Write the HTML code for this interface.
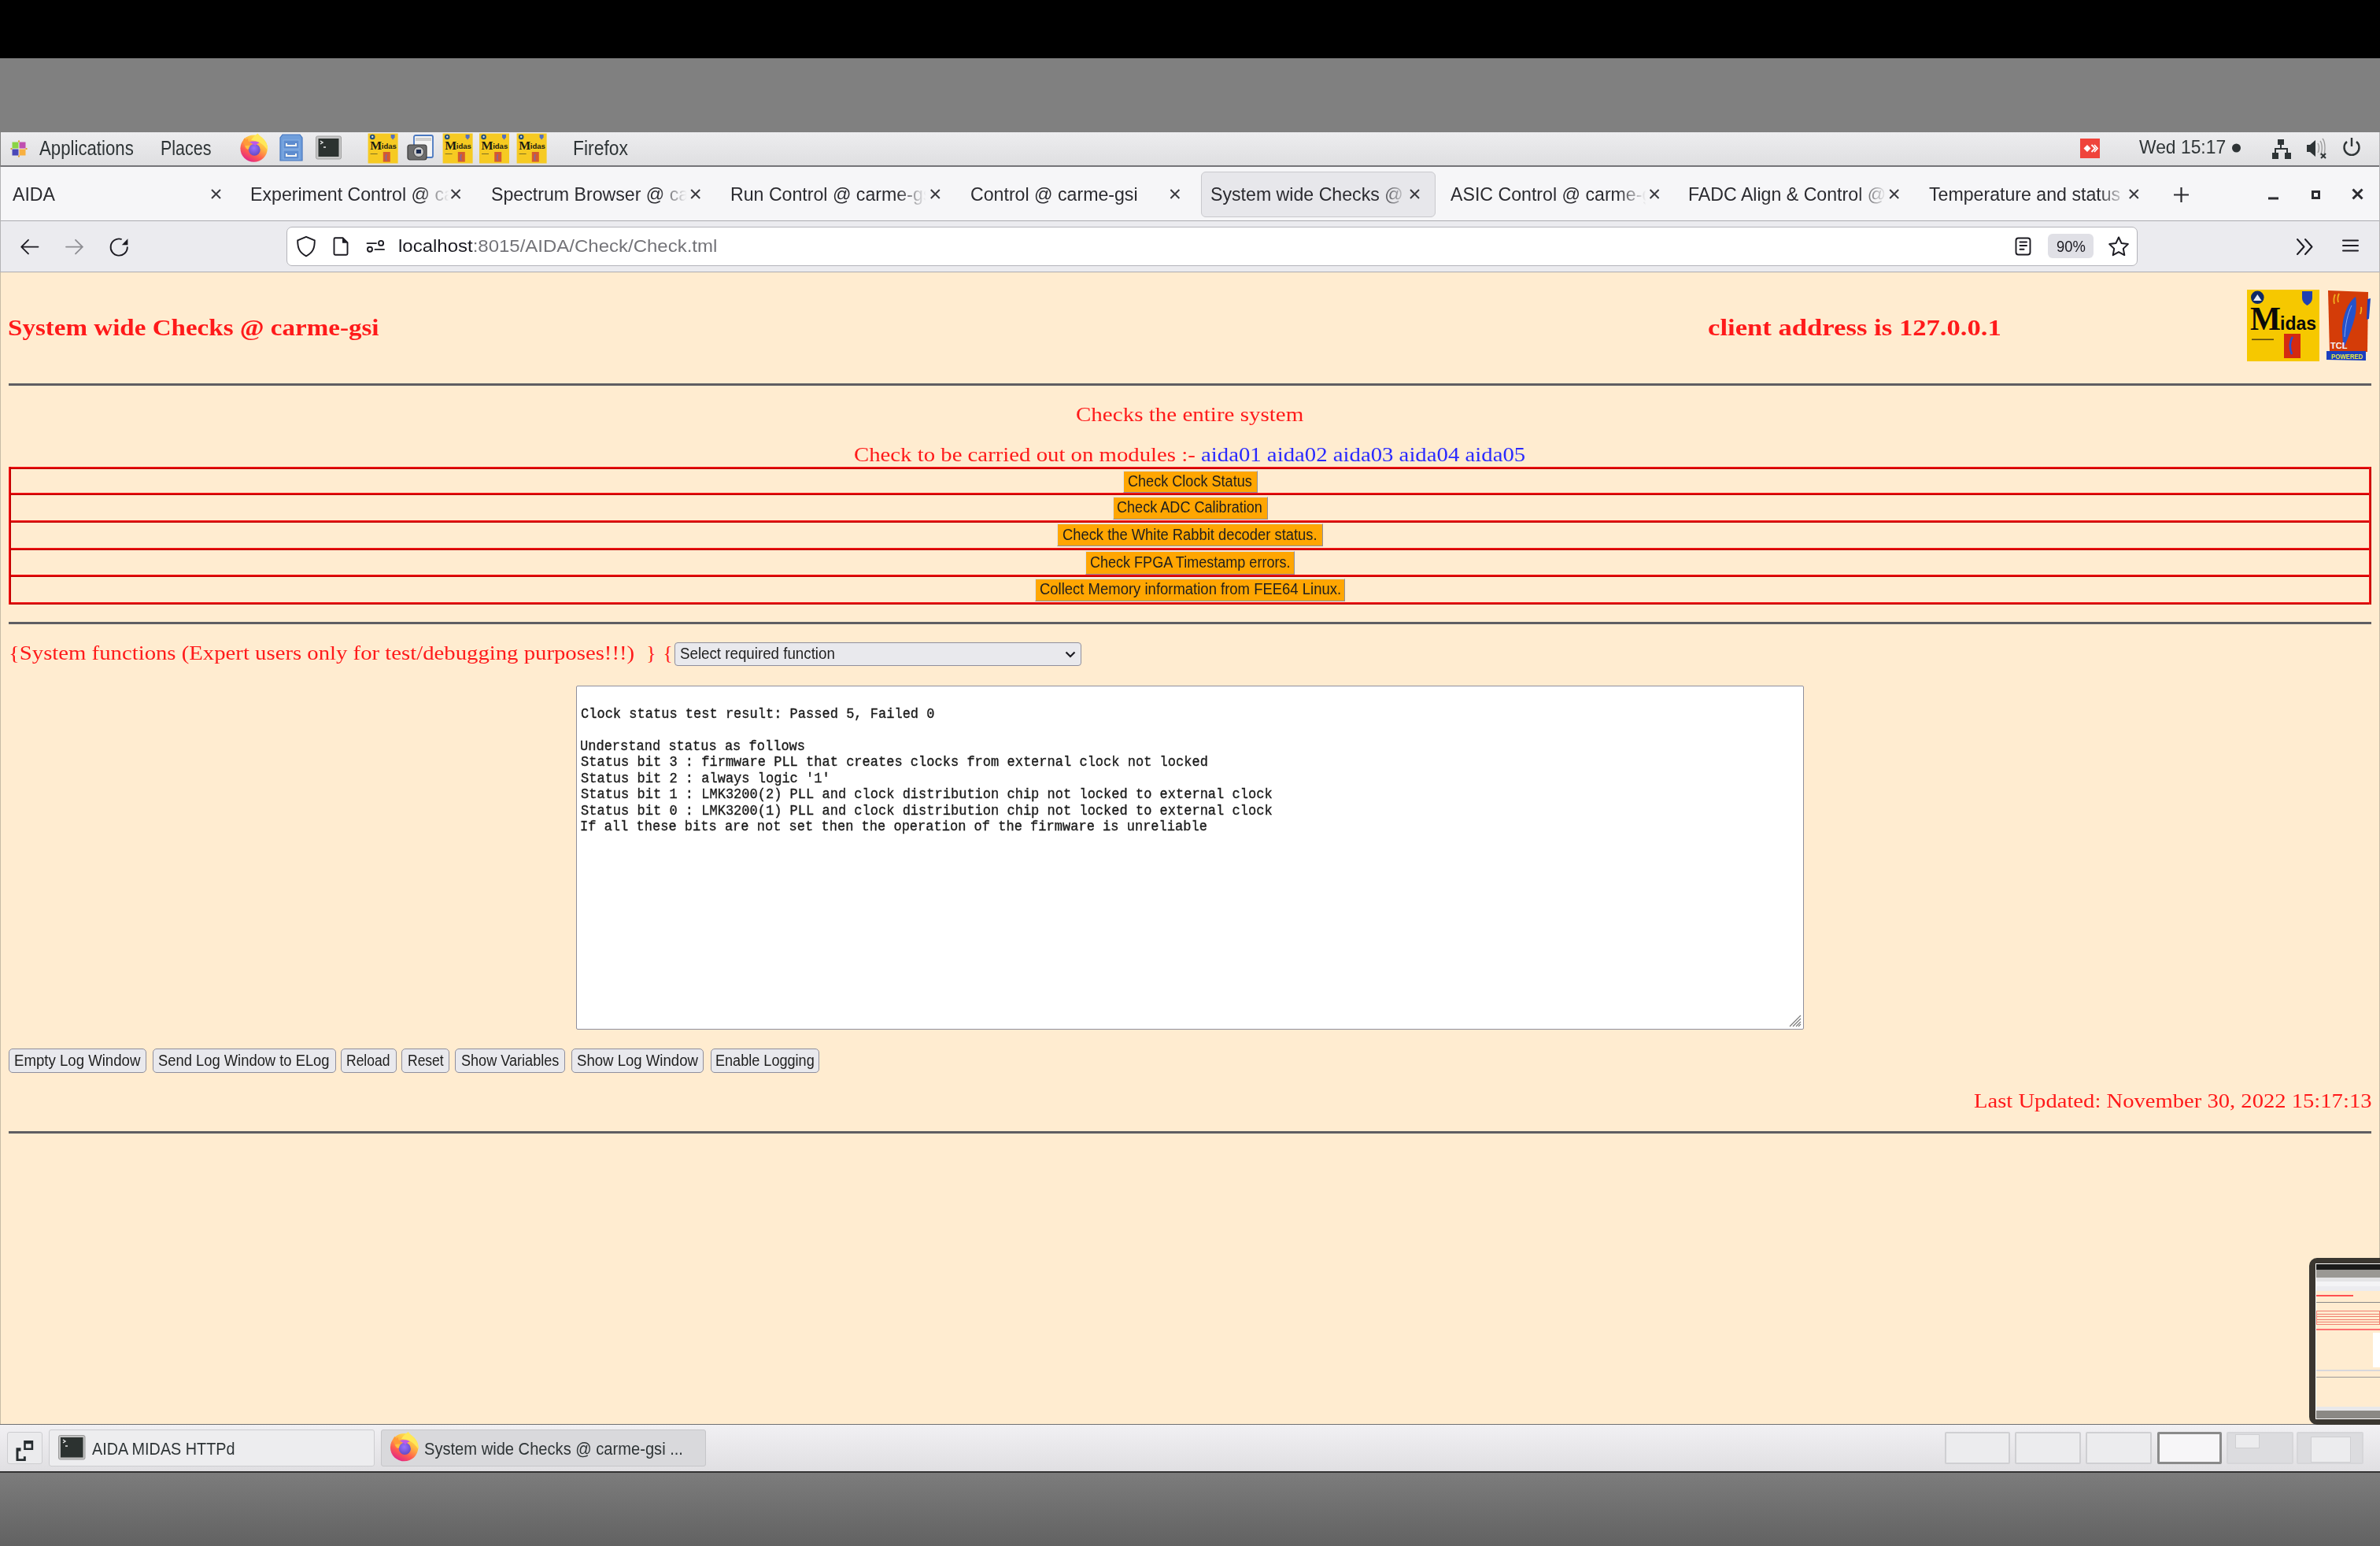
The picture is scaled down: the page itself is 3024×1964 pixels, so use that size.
<!DOCTYPE html>
<html><head><meta charset="utf-8">
<style>
*{margin:0;padding:0;box-sizing:border-box}
html,body{width:3024px;height:1964px;overflow:hidden;background:#808080;position:relative;font-family:"Liberation Sans",sans-serif}
.a{position:absolute}
.t{position:absolute;white-space:nowrap;transform-origin:0 0;line-height:1}
.rl{position:absolute;left:11px;width:3002px;height:3px;background:linear-gradient(#ff2424,#d80000 55%,#b40000)}
.rv{position:absolute;top:593px;width:3px;height:175px;background:linear-gradient(90deg,#ff2424,#d80000 55%,#b40000)}
.ob{position:absolute;background:#ffa602;border:1px solid #8e8e9c;border-top-color:#dfe2ea;border-left-color:#dfe2ea}
.gb{position:absolute;background:#e9e9ed;border:1.5px solid #8f8f9d;border-radius:5px;top:1332px;height:31px}
.hr{position:absolute;left:11px;width:3002px;height:3px;background:#5e5e62}
.ws{position:absolute;top:1819px;height:41px;border:2px solid #cfcfd2;background:#ececee;border-radius:2px}
</style></head><body>
<!-- mac black bar -->
<div class="a" style="left:0;top:0;width:3024px;height:74px;background:#000"></div>
<!-- gray band -->
<div class="a" style="left:0;top:74px;width:3024px;height:94px;background:#808080"></div>

<!-- top gnome panel -->
<div id="panel" class="a" style="left:1px;top:168px;width:3023px;height:44px;background:linear-gradient(#ededef,#dfdfe1);border-bottom:2px solid #747478"></div>

<svg class="a" style="left:0;top:168px" width="3024" height="42">
<defs>
<linearGradient id="ffg" x1="0.85" y1="0.05" x2="0.3" y2="1"><stop offset="0" stop-color="#fff050"/><stop offset="0.4" stop-color="#ffb040"/><stop offset="0.7" stop-color="#ff5c50"/><stop offset="1" stop-color="#e0228a"/></linearGradient>
<radialGradient id="ffp" cx="0.45" cy="0.35" r="0.7"><stop offset="0" stop-color="#9a70ff"/><stop offset="1" stop-color="#6048c0"/></radialGradient>
<g id="ffx">
<circle cx="17.6" cy="18.6" r="17.2" fill="url(#ffg)"/>
<path d="M14 8C17 4 20 1 22.5 -0.5C25 3 30 6 33 11C35 15 35.5 18 35 21C31 15 26 10 19 9z" fill="#ffe858"/>
<path d="M4 8l2-3 1.5 3 2-2 1 3.5C13 11 15 13 17 16 13 15.5 10 17 8 19.5 6 17 5 12 4 8z" fill="#ff9a38"/>
<path d="M6 15.5C10 14 14 14.5 17.5 17 14 17.5 11.5 18.5 9.5 20z" fill="#ffc040"/>
<circle cx="18.3" cy="20.3" r="7.4" fill="url(#ffp)"/>
<path d="M12 10.5C15 9 22 9 24.5 11.5 22 12.5 20.5 13.5 19.5 15 17 13.5 14.5 12 12 10.5z" fill="#c058e8"/>
</g>
<g id="midas"><rect x="0" y="0" width="38" height="38" fill="#f6ca22"/><circle cx="5.6" cy="4.5" r="3.3" fill="#24507a"/><circle cx="5.6" cy="4.3" r="1.2" fill="#d8e0e8"/><path d="M29 1.5h5v3.5l-2.5 3-2.5-3z" fill="#5570c0"/><text x="2.6" y="20.7" font-family="Liberation Serif" font-weight="700" font-size="15.5" fill="#1a1a10" textLength="15" lengthAdjust="spacingAndGlyphs">M</text><text x="17.2" y="19.8" font-family="Liberation Sans" font-weight="700" font-size="8.5" fill="#1a1a10" textLength="19" lengthAdjust="spacingAndGlyphs">idas</text><rect x="3" y="25.5" width="9" height="1" fill="#807020"/><rect x="19.2" y="23.5" width="9" height="12.6" fill="#d45a30"/><path d="M23.5 26.5c-1 3-1 6 0 8" stroke="#7a6aa8" stroke-width="1.5" fill="none"/></g>
</defs>
<!-- apps icon -->
<g transform="translate(13.5,10.5)">
<rect x="2" y="2" width="8" height="8" fill="#8bd444"/><rect x="11" y="2" width="8" height="8" fill="#c04fb0"/>
<rect x="2" y="11" width="8" height="8" fill="#4a48b8"/><rect x="11" y="11" width="8" height="8" fill="#f8b040"/>
<path d="M10.5 0v2M10.5 19v2M0 10.5h2M19 10.5h2" stroke="#e0a030" stroke-width="2"/>
</g>
<!-- firefox -->
<g transform="translate(305,2)"><use href="#ffx"/></g>
<!-- file cabinet -->
<g transform="translate(356,3)">
<path d="M3 0h22l3 4v29H0V4z" fill="#6f9edb" stroke="#4677c0" stroke-width="1.2"/>
<rect x="4" y="7" width="20" height="11" fill="#5d8ccf" stroke="#89b1e6" stroke-width="1"/>
<rect x="4" y="20" width="20" height="11" fill="#5d8ccf" stroke="#89b1e6" stroke-width="1"/>
<path d="M8 11v3h12v-3M8 24v3h12v-3" stroke="#f4f4f4" stroke-width="2" fill="none"/>
</g>
<!-- terminal -->
<rect x="401.5" y="5" width="32" height="29" rx="2" fill="#c6c6c6" stroke="#a0a0a0" stroke-width="1"/>
<rect x="404.5" y="8" width="26" height="23" fill="#2c3230"/>
<path d="M407 11l3 2-3 2M411 19h3" stroke="#e8e8e8" stroke-width="1.5" fill="none"/>
<use href="#midas" x="467.6" y="1.5"/>
<use href="#midas" x="562.6" y="1.5"/>
<use href="#midas" x="609" y="1.5"/>
<use href="#midas" x="656.6" y="1.5"/>
<!-- screenshot icon -->
<g transform="translate(517,3)">
<rect x="9" y="1" width="24" height="28" rx="2" fill="#f4f4f4" stroke="#4a78c0" stroke-width="1.8"/>
<rect x="11" y="4" width="20" height="4" fill="#d0d0d0"/>
<rect x="1" y="13" width="24" height="19" rx="3" fill="#6c6c6c" stroke="#3a3a3a" stroke-width="1.2"/>
<circle cx="15" cy="22" r="6.5" fill="#c8c8c8" stroke="#444" stroke-width="1"/>
<rect x="12" y="19" width="6" height="5" fill="#1a2a50"/>
</g>
<!-- anydesk -->
<rect x="2643" y="8" width="25" height="25" fill="#ef443b"/>
<path d="M2647.5 20.5l4.5-4.5 4.5 4.5-4.5 4.5z" fill="#fff"/>
<path d="M2657.5 16l4.5 4.5-4.5 4.5M2661 16l4 4.5-4 4.5" stroke="#fff" stroke-width="1.8" fill="none"/>
<circle cx="2841.5" cy="20" r="5.5" fill="#2e3436"/>
<!-- network -->
<g fill="#2e3436">
<rect x="2894" y="9" width="8" height="7"/><rect x="2887" y="26" width="8" height="8"/><rect x="2903" y="26" width="8" height="8"/>
<path d="M2897 16h2v5h-2zM2890 20h17v2h-17zM2890 20h2v6h-2zM2905 20h2v6h-2z"/>
</g>
<!-- volume -->
<path d="M2931 16h4l7-6v21l-7-6h-4z" fill="#2e3436"/>
<path d="M2945 14c2 3 2 9 0 12M2948 11c3 4 3 14 0 18M2951 8c4 5 4 19 0 24" stroke="#9a9a9a" stroke-width="1.3" fill="none"/>
<path d="M2949 27l6 6M2955 27l-6 6" stroke="#2e3436" stroke-width="2"/>
<!-- power -->
<path d="M2982 12a9.5 9.5 0 1 0 12 0" stroke="#2e3436" stroke-width="2.4" fill="none"/>
<path d="M2988 7v11" stroke="#2e3436" stroke-width="2.4"/>
</svg>

<!-- tab bar -->
<div id="tabbar" class="a" style="left:1px;top:212px;width:3022px;height:69px;background:#f6f6f8;border-bottom:1px solid #acacb0"></div>

<!-- nav bar -->
<div id="navbar" class="a" style="left:1px;top:281px;width:3022px;height:65px;background:#ebebef;border-bottom:1px solid #acacb0"></div>

<!-- active tab -->
<div class="a" style="left:1526px;top:218px;width:298px;height:58px;background:#e7e7eb;border:1px solid #c9c9cd;border-radius:6px"></div>
<!-- tab close x's -->
<svg class="a" style="left:0;top:212px" width="3024" height="69">
<g stroke="#3a3a40" stroke-width="2" fill="none">
<path d="M269 29l11 11M280 29l-11 11"/>
<path d="M573.6 29l11 11M584.6 29l-11 11"/>
<path d="M878.2 29l11 11M889.2 29l-11 11"/>
<path d="M1182.8 29l11 11M1193.8 29l-11 11"/>
<path d="M1487.4 29l11 11M1498.4 29l-11 11"/>
<path d="M1792 29l11 11M1803 29l-11 11"/>
<path d="M2096.6 29l11 11M2107.6 29l-11 11"/>
<path d="M2401.2 29l11 11M2412.2 29l-11 11"/>
<path d="M2705.8 29l11 11M2716.8 29l-11 11"/>
</g>
<g stroke="#2b2b30" fill="none">
<path d="M2771.5 26v19M2762 35.5h19" stroke-width="2.2"/>
<path d="M2882 40h13" stroke-width="3"/>
<rect x="2938.5" y="31.5" width="8" height="8" stroke-width="3"/>
<path d="M2989.5 28.5l12 12M3001.5 28.5l-12 12" stroke-width="3"/>
</g>
</svg>
<!-- nav bar icons -->
<div class="a" style="left:364px;top:288px;width:2352px;height:50px;background:#fff;border:1px solid #b4b4ba;border-radius:7px"></div>
<div class="a" style="left:2602px;top:297px;width:58px;height:31px;background:#e0e0e6;border-radius:6px"></div>
<svg class="a" style="left:0;top:281px" width="3024" height="65">
<g stroke="#1c1b22" stroke-width="2.2" fill="none" stroke-linecap="round" stroke-linejoin="round">
<path d="M27.5 32.6h21M36 23.8l-8.8 8.8 8.8 8.8" stroke-width="1.8"/>
<path d="M84 32.6h21M96 23.8l8.8 8.8-8.8 8.8" stroke="#8d8d92" stroke-width="1.8"/>
<path d="M154 22.8A10.6 10.6 0 1 0 161.8 33.2" stroke-width="1.9"/>
<path d="M389 19.8l10.8 4.6c0 9-1.5 15-10.8 20-9.3-5-10.8-11-10.8-20z" stroke-width="1.9"/>
<path d="M426 21.2h9.5l6 6v14a1.5 1.5 0 0 1-1.5 1.5h-14a1.5 1.5 0 0 1-1.5-1.5v-18.5a1.5 1.5 0 0 1 1.5-1.5z" stroke-width="1.9"/>
<path d="M466.5 28.1h11.5M476.5 35.9h11.5" stroke-width="1.9"/>
<circle cx="484.1" cy="27.9" r="3" stroke-width="1.9"/>
<circle cx="470" cy="35.8" r="3" stroke-width="1.9"/>
<rect x="2561.5" y="21.5" width="18" height="21" rx="3" stroke-width="1.9"/>
<path d="M2566.5 26.5h8.5M2566.5 31.1h8.5M2566.5 35.8h5" stroke-width="2"/>
<path d="M2692 20.5l3.6 7.6 8.2 1-6 5.8 1.5 8.2-7.3-4-7.3 4 1.5-8.2-6-5.8 8.2-1z" stroke-width="2"/>
<path d="M2919 23l8.5 9.5-8.5 9.5M2929 23l8.5 9.5-8.5 9.5" stroke-width="2"/>
<path d="M2977 24.5h19M2977 31h19M2977 37.5h19" stroke-width="2"/>
</g>
<path d="M162.4 22.2v8h-7.6z" fill="#1c1b22"/>
<path d="M435 21.2v6.5h6.5z" fill="#1c1b22"/>
</svg>

<!-- page -->
<div id="page" class="a" style="left:1px;top:346px;width:3022px;height:1463px;background:#ffecd0"></div>
<!-- window borders -->
<div class="a" style="left:0;top:346px;width:1px;height:1463px;background:#c8bca6"></div>
<div class="a" style="left:3023px;top:346px;width:1px;height:1463px;background:#c8bca6"></div>
<div class="a" style="left:0;top:212px;width:1px;height:134px;background:#b4b4b6"></div>
<div class="a" style="left:3023px;top:168px;width:1px;height:178px;background:#b4b4b6"></div>

<!-- header logos -->
<svg class="a" style="left:2855px;top:368px" width="92" height="91">
<rect width="92" height="91" fill="#f6c800"/>
<circle cx="13.3" cy="9.8" r="8.3" fill="#0f2a66"/>
<path d="M8 14l5.3-8 5.3 8z" fill="#e8eef8"/>
<path d="M70 2h13v8c0 5-3 8-6.5 10-3.5-2-6.5-5-6.5-10z" fill="#2040b0"/>
<text x="4" y="51" font-family="Liberation Serif" font-weight="700" font-size="42" fill="#0a0a0a" textLength="39" lengthAdjust="spacingAndGlyphs">M</text>
<text x="42" y="51" font-family="Liberation Sans" font-weight="700" font-size="24" fill="#0a0a0a" textLength="46" lengthAdjust="spacingAndGlyphs">idas</text>
<rect x="6" y="62.5" width="28" height="1.6" fill="#5a4a10"/>
<rect x="47" y="56" width="21" height="31" fill="#d42a10"/>
<path d="M58 60c-4 6-4 14-1 22" stroke="#2a50d0" stroke-width="2.5" fill="none"/>
</svg>
<svg class="a" style="left:2955px;top:368px" width="60" height="92">
<path d="M3 1l51 2-1 76-48 1z" fill="#d43c08"/>
<path d="M53 12l4-1-2 26-3 1z" fill="#1a40c0"/>
<path d="M38 9C30 14 22 30 21 50C21 60 22 67 23 74C28 62 35 46 38 30C39 22 39 14 38 9z" fill="#2452cc"/><path d="M33 20C28 30 25 44 24 60" stroke="#8aa8f0" stroke-width="1" fill="none"/>
<path d="M12 6c-2 4-2 8-1 12M17 5c-2 4-2 8-1 11M45 22c1 3 0 6-1 9" stroke="#f0b020" stroke-width="1.8" fill="none"/>
<text x="6" y="75" font-family="Liberation Sans" font-weight="700" font-size="11" fill="#f4f4f4">TCL</text>
<path d="M1 78h50v12l-50-1z" fill="#1a3fc0"/>
<text x="7" y="88" font-family="Liberation Sans" font-weight="700" font-size="9" fill="#e8e840" textLength="40" lengthAdjust="spacingAndGlyphs">POWERED</text>
</svg>

<!-- hrs -->
<div class="hr" style="top:487px"></div>
<div class="hr" style="top:790px"></div>
<div class="hr" style="top:1437px"></div>

<!-- red table -->
<div class="rl" style="top:593px"></div>
<div class="rl" style="top:765px"></div>
<div class="rl" style="top:626px"></div>
<div class="rl" style="top:661px"></div>
<div class="rl" style="top:696px"></div>
<div class="rl" style="top:730px"></div>
<div class="rv" style="left:11px"></div>
<div class="rv" style="left:3010px"></div>

<!-- orange buttons -->
<div class="ob" style="left:1427px;top:598px;width:171px;height:28px"></div>
<div class="ob" style="left:1414px;top:631px;width:197px;height:29px"></div>
<div class="ob" style="left:1343px;top:665px;width:338px;height:29px"></div>
<div class="ob" style="left:1379px;top:700px;width:266px;height:30px"></div>
<div class="ob" style="left:1315px;top:735px;width:394px;height:29px"></div>

<!-- select -->
<div class="a" style="left:857px;top:816px;width:517px;height:30px;background:#e9e9ed;border:1.5px solid #8f8f9d;border-radius:4px"></div>
<svg class="a" style="left:1350px;top:822px" width="20" height="20"><path d="M4.5 6.5l5.5 5.5 5.5-5.5" stroke="#1c1b22" stroke-width="2.2" fill="none"/></svg>

<!-- textarea -->
<div class="a" style="left:732px;top:871px;width:1560px;height:437px;background:#fff;border:1.5px solid #8f8f9d;border-radius:2px"></div>
<svg class="a" style="left:2272px;top:1288px" width="18" height="18"><path d="M16 2L2 16M16 6L6 16M16 10L10 16M16 13L13 16" stroke="#777" stroke-width="1.2"/></svg>

<!-- gray buttons -->
<div class="gb" style="left:11px;width:175px"></div>
<div class="gb" style="left:194px;width:233px"></div>
<div class="gb" style="left:433px;width:71px"></div>
<div class="gb" style="left:510px;width:61px"></div>
<div class="gb" style="left:578px;width:140px"></div>
<div class="gb" style="left:726px;width:168px"></div>
<div class="gb" style="left:903px;width:138px"></div>

<!-- taskbar -->
<div id="taskbar" class="a" style="left:0;top:1809px;width:3024px;height:62px;background:linear-gradient(#f1f0f3,#e0dfe2);border-top:1px solid #707072;border-bottom:2px solid #333"></div>
<div class="a" style="left:9px;top:1819px;width:45px;height:41px;border:1.5px solid #cdcdd0;border-radius:3px;background:#ebebed"></div>
<div class="a" style="left:62px;top:1816px;width:414px;height:47px;border:1.5px solid #cdcdd0;border-radius:3px;background:#ededef"></div>
<div class="a" style="left:484px;top:1816px;width:413px;height:47px;border:1.5px solid #c6c6c9;border-radius:3px;background:#d9d9dc"></div>
<div class="ws" style="left:2471px;width:83px"></div>
<div class="ws" style="left:2560px;width:84px"></div>
<div class="ws" style="left:2650px;width:84px"></div>
<div class="ws" style="left:2741px;width:82px;border:3px solid #8a8a8a;background:#f7f6f8"></div>
<div class="ws" style="left:2829px;width:85px;background:#dcdcdf;border-color:#d6d6d9"></div>
<div class="ws" style="left:2918px;width:85px;background:#dcdcdf;border-color:#d6d6d9"></div>

<!-- bottom gray -->
<div class="a" style="left:0;top:1871px;width:3024px;height:93px;background:linear-gradient(#7c7c7c,#626262)"></div>
<!-- taskbar icons -->
<svg class="a" style="left:0;top:1809px" width="1000" height="62">
<path fill="#262c2f" fill-rule="evenodd" d="M30.2 21h12v12h-12zM32.8 25.3h6.8v5.2h-6.8z"/>
<path fill="#262c2f" d="M20.5 30.3h6v4.3h-3v9.6h6.4v-3h2.9v5.9h-12.3z"/>
<rect x="74.5" y="14.5" width="33.5" height="30.5" rx="2" fill="#c2c2c2" stroke="#9a9a9a" stroke-width="1"/>
<rect x="77" y="17" width="28.5" height="25.5" fill="#2c3230"/>
<path d="M80 20l3 2-3 2M83 28h3" stroke="#e8e8e8" stroke-width="1.4" fill="none"/>
<g transform="translate(495.5,10.5) scale(1.03)"><use href="#ffx"/></g>

</svg>
<div class="a" style="left:2840px;top:1822px;width:31px;height:18px;border:1.5px solid #cfcfd2;background:#ececee"></div>
<div class="a" style="left:2936px;top:1825px;width:51px;height:33px;border:1.5px solid #cfcfd2;background:#ececee"></div>
<!-- thumbnail overlay -->
<div class="a" style="left:2934px;top:1598px;width:100px;height:212px;background:#3a3630;border-radius:10px 0 0 10px"></div>
<div class="a" style="left:2942px;top:1605px;width:82px;height:198px;background:#fff"></div>
<div class="a" style="left:2943px;top:1606px;width:81px;height:196px;background:#ffecd0"></div>
<div class="a" style="left:2943px;top:1606px;width:81px;height:7px;background:#1a1a1a"></div>
<div class="a" style="left:2943px;top:1613px;width:81px;height:10px;background:#9a9894"></div>
<div class="a" style="left:2943px;top:1623px;width:81px;height:5px;background:#e4e4e6"></div>
<div class="a" style="left:2943px;top:1628px;width:81px;height:6px;background:#f4f4f6"></div>
<div class="a" style="left:2943px;top:1634px;width:81px;height:6px;background:#ececf0"></div>
<div class="a" style="left:2943px;top:1645px;width:47px;height:2px;background:#ff5050"></div>
<div class="a" style="left:2943px;top:1654px;width:81px;height:1px;background:#888"></div>
<div class="a" style="left:2943px;top:1665px;width:81px;height:18px;border:1px solid #f08070"></div>
<div class="a" style="left:2943px;top:1669px;width:81px;height:1px;background:#f08070"></div>
<div class="a" style="left:2943px;top:1672px;width:81px;height:1px;background:#f08070"></div>
<div class="a" style="left:2943px;top:1676px;width:81px;height:1px;background:#f08070"></div>
<div class="a" style="left:2943px;top:1679px;width:81px;height:1px;background:#f08070"></div>
<div class="a" style="left:2943px;top:1688px;width:81px;height:2px;background:#ff7070"></div>
<div class="a" style="left:3015px;top:1693px;width:9px;height:44px;background:#fff"></div>
<div class="a" style="left:2943px;top:1740px;width:81px;height:2px;background:#d8d8dc"></div>
<div class="a" style="left:2943px;top:1749px;width:81px;height:1px;background:#999"></div>
<div class="a" style="left:2943px;top:1787px;width:81px;height:5px;background:#e8e8ea"></div>
<div class="a" style="left:2943px;top:1792px;width:81px;height:10px;background:#8a8884"></div>

<div id="p_apps" class="t" style="left:49.74px;top:175.58px;font-family:'Liberation Sans',sans-serif;font-weight:400;font-size:25.3px;color:#2e3436;transform:scaleX(0.8779);">Applications</div>
<div id="p_places" class="t" style="left:203.58px;top:175.58px;font-family:'Liberation Sans',sans-serif;font-weight:400;font-size:25.3px;color:#2e3436;transform:scaleX(0.8500);">Places</div>
<div id="p_ff" class="t" style="left:728.19px;top:175.58px;font-family:'Liberation Sans',sans-serif;font-weight:400;font-size:25.3px;color:#2e3436;transform:scaleX(0.9040);">Firefox</div>
<div id="p_clock" class="t" style="left:2718.00px;top:176.14px;font-family:'Liberation Sans',sans-serif;font-weight:400;font-size:23.7px;color:#2e3436;transform:scaleX(0.9649);">Wed 15:17</div>
<div id="tb5" class="t" style="left:1233.04px;top:234.70px;font-family:'Liberation Sans',sans-serif;font-weight:400;font-size:24.1px;color:#2b2b30;transform:scaleX(0.9607);">Control @ carme-gsi</div>
<div id="tb1" class="t" style="left:16.00px;top:234.70px;font-family:'Liberation Sans',sans-serif;font-weight:400;font-size:24.1px;color:#2b2b30;transform:scaleX(0.9607);">AIDA</div>
<div id="tb2" class="t" style="left:318.46px;top:234.70px;font-family:'Liberation Sans',sans-serif;font-weight:400;font-size:24.1px;color:#2b2b30;transform:scaleX(0.9607);width:262.7px;overflow:hidden;padding-bottom:8px;-webkit-mask-image:linear-gradient(to right,#000 calc(100% - 38px),transparent);">Experiment Control @ carme-gsi</div>
<div id="tb3" class="t" style="left:624.42px;top:234.70px;font-family:'Liberation Sans',sans-serif;font-weight:400;font-size:24.1px;color:#2b2b30;transform:scaleX(0.9607);width:258.5px;overflow:hidden;padding-bottom:8px;-webkit-mask-image:linear-gradient(to right,#000 calc(100% - 38px),transparent);">Spectrum Browser @ carme-gsi</div>
<div id="tb4" class="t" style="left:928.08px;top:234.70px;font-family:'Liberation Sans',sans-serif;font-weight:400;font-size:24.1px;color:#2b2b30;transform:scaleX(0.9607);width:259.4px;overflow:hidden;padding-bottom:8px;-webkit-mask-image:linear-gradient(to right,#000 calc(100% - 38px),transparent);">Run Control @ carme-gsi</div>
<div id="tb6" class="t" style="left:1538.04px;top:234.70px;font-family:'Liberation Sans',sans-serif;font-weight:400;font-size:24.1px;color:#2b2b30;transform:scaleX(0.9607);width:261.7px;overflow:hidden;padding-bottom:8px;-webkit-mask-image:linear-gradient(to right,#000 calc(100% - 38px),transparent);">System wide Checks @ carme-gsi</div>
<div id="tb7" class="t" style="left:1842.79px;top:234.70px;font-family:'Liberation Sans',sans-serif;font-weight:400;font-size:24.1px;color:#2b2b30;transform:scaleX(0.9607);width:258.5px;overflow:hidden;padding-bottom:8px;-webkit-mask-image:linear-gradient(to right,#000 calc(100% - 38px),transparent);">ASIC Control @ carme-gsi</div>
<div id="tb8" class="t" style="left:2145.08px;top:234.70px;font-family:'Liberation Sans',sans-serif;font-weight:400;font-size:24.1px;color:#2b2b30;transform:scaleX(0.9607);width:263.0px;overflow:hidden;padding-bottom:8px;-webkit-mask-image:linear-gradient(to right,#000 calc(100% - 38px),transparent);">FADC Align &amp; Control @ carme-gsi</div>
<div id="tb9" class="t" style="left:2451.00px;top:234.70px;font-family:'Liberation Sans',sans-serif;font-weight:400;font-size:24.1px;color:#2b2b30;transform:scaleX(0.9607);width:261.5px;overflow:hidden;padding-bottom:8px;-webkit-mask-image:linear-gradient(to right,#000 calc(100% - 38px),transparent);">Temperature and status summary</div>
<div id="u_url" class="t" style="left:506.17px;top:302.05px;font-family:'Liberation Sans',sans-serif;font-weight:400;font-size:22.5px;color:#1c1b22;transform:scaleX(1.0660);">localhost<span style="color:#737378">:8015/AIDA/Check/Check.tml</span></div>
<div id="u_zoom" class="t" style="left:2612.83px;top:304.24px;font-family:'Liberation Sans',sans-serif;font-weight:400;font-size:19.8px;color:#1c1b22;transform:scaleX(0.9308);">90%</div>
<div id="t_title" class="t" style="left:10.43px;top:401.71px;font-family:'Liberation Serif',serif;font-weight:700;font-size:29px;color:#ff1a1a;transform:scaleX(1.1400);">System wide Checks @ carme-gsi</div>
<div id="t_client" class="t" style="left:2169.56px;top:401.91px;font-family:'Liberation Serif',serif;font-weight:700;font-size:29px;color:#ff1a1a;transform:scaleX(1.1948);">client address is 127.0.0.1</div>
<div id="t_checks" class="t" style="left:1367.14px;top:513.76px;font-family:'Liberation Serif',serif;font-weight:400;font-size:25.6px;color:#ff1a1a;transform:scaleX(1.1339);">Checks the entire system</div>
<div id="t_mod" class="t" style="left:1085.35px;top:564.56px;font-family:'Liberation Serif',serif;font-weight:400;font-size:25.6px;color:#ff1a1a;transform:scaleX(1.1240);">Check to be carried out on modules :- <span style="color:#2a2aff">aida01 aida02 aida03 aida04 aida05</span></div>
<div id="t_sys" class="t" style="left:11.16px;top:816.64px;font-family:'Liberation Serif',serif;font-weight:400;font-size:25.5px;color:#ff1a1a;transform:scaleX(1.1269);">{System functions (Expert users only for test/debugging purposes!!!)</div>
<div id="t_br1" class="t" style="left:821.19px;top:816.64px;font-family:'Liberation Serif',serif;font-weight:400;font-size:25.5px;color:#ff1a1a;">}</div>
<div id="t_br2" class="t" style="left:842.39px;top:816.64px;font-family:'Liberation Serif',serif;font-weight:400;font-size:25.5px;color:#ff1a1a;">{</div>
<div id="t_upd" class="t" style="left:2507.78px;top:1386.22px;font-family:'Liberation Serif',serif;font-weight:400;font-size:26px;color:#ff1a1a;transform:scaleX(1.1007);">Last Updated: November 30, 2022 15:17:13</div>
<div id="ob1" class="t" style="left:1432.84px;top:602.31px;font-family:'Liberation Sans',sans-serif;font-weight:400;font-size:19.6px;color:#1e1e1e;transform:scaleX(0.9229);">Check Clock Status</div>
<div id="ob2" class="t" style="left:1419.45px;top:635.21px;font-family:'Liberation Sans',sans-serif;font-weight:400;font-size:19.6px;color:#1e1e1e;transform:scaleX(0.9226);">Check ADC Calibration</div>
<div id="ob3" class="t" style="left:1350.22px;top:670.31px;font-family:'Liberation Sans',sans-serif;font-weight:400;font-size:19.6px;color:#1e1e1e;transform:scaleX(0.9372);">Check the White Rabbit decoder status.</div>
<div id="ob4" class="t" style="left:1385.23px;top:704.71px;font-family:'Liberation Sans',sans-serif;font-weight:400;font-size:19.6px;color:#1e1e1e;transform:scaleX(0.9200);">Check FPGA Timestamp errors.</div>
<div id="ob5" class="t" style="left:1320.80px;top:739.11px;font-family:'Liberation Sans',sans-serif;font-weight:400;font-size:19.6px;color:#1e1e1e;transform:scaleX(0.9432);">Collect Memory information from FEE64 Linux.</div>
<div id="sel" class="t" style="left:864.41px;top:820.25px;font-family:'Liberation Sans',sans-serif;font-weight:400;font-size:20.5px;color:#1e1e1e;transform:scaleX(0.9140);">Select required function</div>
<div id="m0" class="t" style="left:738.38px;top:897.71px;font-family:'Liberation Mono',monospace;font-weight:400;font-size:18px;color:#1a1a1a;transform:scaleX(0.9458);-webkit-text-stroke:0.35px #1a1a1a;">Clock status test result: Passed 5, Failed 0</div>
<div id="m2" class="t" style="left:737.43px;top:938.81px;font-family:'Liberation Mono',monospace;font-weight:400;font-size:18px;color:#1a1a1a;transform:scaleX(0.9458);-webkit-text-stroke:0.35px #1a1a1a;">Understand status as follows</div>
<div id="m3" class="t" style="left:738.38px;top:959.21px;font-family:'Liberation Mono',monospace;font-weight:400;font-size:18px;color:#1a1a1a;transform:scaleX(0.9458);-webkit-text-stroke:0.35px #1a1a1a;">Status bit 3 : firmware PLL that creates clocks from external clock not locked</div>
<div id="m4" class="t" style="left:738.38px;top:979.61px;font-family:'Liberation Mono',monospace;font-weight:400;font-size:18px;color:#1a1a1a;transform:scaleX(0.9458);-webkit-text-stroke:0.35px #1a1a1a;">Status bit 2 : always logic '1'</div>
<div id="m5" class="t" style="left:738.38px;top:1000.11px;font-family:'Liberation Mono',monospace;font-weight:400;font-size:18px;color:#1a1a1a;transform:scaleX(0.9458);-webkit-text-stroke:0.35px #1a1a1a;">Status bit 1 : LMK3200(2) PLL and clock distribution chip not locked to external clock</div>
<div id="m6" class="t" style="left:738.38px;top:1020.51px;font-family:'Liberation Mono',monospace;font-weight:400;font-size:18px;color:#1a1a1a;transform:scaleX(0.9458);-webkit-text-stroke:0.35px #1a1a1a;">Status bit 0 : LMK3200(1) PLL and clock distribution chip not locked to external clock</div>
<div id="m7" class="t" style="left:737.43px;top:1040.91px;font-family:'Liberation Mono',monospace;font-weight:400;font-size:18px;color:#1a1a1a;transform:scaleX(0.9458);-webkit-text-stroke:0.35px #1a1a1a;">If all these bits are not set then the operation of the firmware is unreliable</div>
<div id="gb1" class="t" style="left:17.87px;top:1337.07px;font-family:'Liberation Sans',sans-serif;font-weight:400;font-size:20px;color:#1e1e1e;transform:scaleX(0.9308);">Empty Log Window</div>
<div id="gb2" class="t" style="left:201.41px;top:1337.07px;font-family:'Liberation Sans',sans-serif;font-weight:400;font-size:20px;color:#1e1e1e;transform:scaleX(0.9186);">Send Log Window to ELog</div>
<div id="gb3" class="t" style="left:440.31px;top:1337.07px;font-family:'Liberation Sans',sans-serif;font-weight:400;font-size:20px;color:#1e1e1e;transform:scaleX(0.8742);">Reload</div>
<div id="gb4" class="t" style="left:517.75px;top:1337.07px;font-family:'Liberation Sans',sans-serif;font-weight:400;font-size:20px;color:#1e1e1e;transform:scaleX(0.8745);">Reset</div>
<div id="gb5" class="t" style="left:585.66px;top:1336.67px;font-family:'Liberation Sans',sans-serif;font-weight:400;font-size:20px;color:#1e1e1e;transform:scaleX(0.9044);">Show Variables</div>
<div id="gb6" class="t" style="left:733.07px;top:1336.67px;font-family:'Liberation Sans',sans-serif;font-weight:400;font-size:20px;color:#1e1e1e;transform:scaleX(0.9291);">Show Log Window</div>
<div id="gb7" class="t" style="left:908.71px;top:1336.67px;font-family:'Liberation Sans',sans-serif;font-weight:400;font-size:20px;color:#1e1e1e;transform:scaleX(0.9044);">Enable Logging</div>
<div id="k1" class="t" style="left:116.80px;top:1829.55px;font-family:'Liberation Sans',sans-serif;font-weight:400;font-size:21.8px;color:#2e3436;transform:scaleX(0.9080);">AIDA MIDAS HTTPd</div>
<div id="k2" class="t" style="left:538.88px;top:1829.95px;font-family:'Liberation Sans',sans-serif;font-weight:400;font-size:21.8px;color:#2e3436;transform:scaleX(0.9229);">System wide Checks @ carme-gsi ...</div>
</body></html>
